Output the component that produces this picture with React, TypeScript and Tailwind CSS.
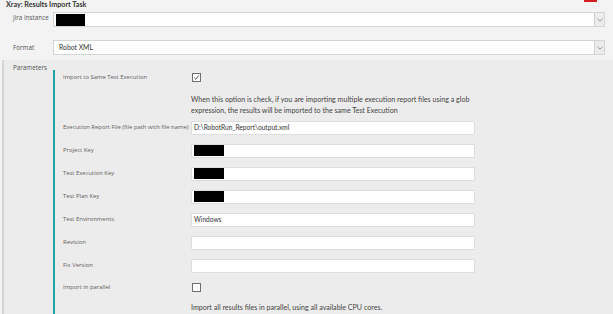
import React from "react";

const Redacted = ({ w, h = 12 }: { w: number; h?: number }) => (
  <div className="bg-black" style={{ width: w, height: h }} />
);

const LABEL_FONT = { fontFamily: '"Open Sans", "Noto Sans", sans-serif' };

function Chevron() {
  return (
    <svg width="6" height="4" viewBox="0 0 6 4" className="block">
      <path d="M0.5 0.8 L3 3.2 L5.5 0.8" fill="none" stroke="#8a8a8a" strokeWidth="0.9" />
    </svg>
  );
}

function Select({ children }: { children?: React.ReactNode }) {
  return (
    <div className="flex-1 h-[15px] bg-white border border-[#d4d4d4] flex items-center">
      <div className="flex-1 flex items-center pl-[1px] h-full">{children}</div>
      <div className="w-[10px] h-[13px] bg-[#ececec] border-l border-[#cfcfcf] flex items-center justify-center">
        <Chevron />
      </div>
    </div>
  );
}

function Row({ label, children, h = 23 }: { label: string; children: React.ReactNode; h?: number }) {
  return (
    <div className="flex items-center" style={{ height: h }}>
      <div className="w-[136px] pl-[8px] text-[5.9px] text-[#5e5e5e] whitespace-nowrap" style={LABEL_FONT}>
        {label}
      </div>
      <div className="flex-none">{children}</div>
    </div>
  );
}

function Input({ children }: { children?: React.ReactNode }) {
  return (
    <div className="w-[284px] h-[14px] bg-white border border-[#dddddd] rounded-[1px] flex items-center pl-[2px] text-[6.6px] text-[#333]">
      {children}
    </div>
  );
}

function Checkbox({ checked }: { checked?: boolean }) {
  return (
    <div className="ml-[1px] w-[9px] h-[9px] border border-[#6e6e6e] bg-white flex items-center justify-center">
      {checked && (
        <svg width="7" height="7" viewBox="0 0 7 7">
          <path d="M1.2 3.6 L2.8 5.2 L5.9 1.4" fill="none" stroke="#444" strokeWidth="0.9" />
        </svg>
      )}
    </div>
  );
}

export default function App() {
  return (
    <div
      className="relative w-[613px] h-[314px] overflow-hidden bg-[#f3f3f3] flex flex-col"
      style={{ fontFamily: 'Lato, "Open Sans", sans-serif' }}
    >
      <div className="absolute left-[584px] top-0 w-[13px] h-[2px] bg-[#d21f1f]" />
      <div className="h-[10px] pl-[6px] text-[7.2px] font-bold text-[#333] leading-[10px]">
        Xray: Results Import Task
      </div>
      <div className="flex items-center mt-[2px] pr-[8px]">
        <div className="w-[53px] pl-[13px] text-[6.3px] text-[#555] self-start pt-[1px]" style={LABEL_FONT}>
          Jira Instance
        </div>
        <Select>
          <div className="ml-[1px]">
            <Redacted w={29} />
          </div>
        </Select>
      </div>
      <div className="flex items-center mt-[13px] pr-[8px]">
        <div className="w-[53px] pl-[13px] text-[6.3px] text-[#555]" style={LABEL_FONT}>
          Format
        </div>
        <Select>
          <span className="pl-[4px] text-[6.8px] text-[#333]">Robot XML</span>
        </Select>
      </div>
      <div className="mt-[5px] ml-[2px] flex-1 bg-[#ececec] border-l-[2px] border-[#d6d6d6] flex">
        <div className="w-[49px] pl-[9px] pt-[3px] text-[6.3px] text-[#555]" style={LABEL_FONT}>
          Parameters
        </div>
        <div className="mt-[10px] border-l-[2px] border-[#20a5a5] flex flex-col">
          <Row label="Import to Same Test Execution" h={15}>
            <Checkbox checked />
          </Row>
          <div className="pl-[136px] pt-[9px] text-[7.1px] leading-[11px] text-[#444] whitespace-nowrap">
            When this option is check, if you are importing multiple execution report files using a glob
            <br />
            expression, the results will be imported to the same Test Execution
          </div>
          <Row label="Execution Report File (file path with file name)">
            <Input>D:\RobotRun_Report\output.xml</Input>
          </Row>
          <Row label="Project Key">
            <Input>
              <Redacted w={30} h={11} />
            </Input>
          </Row>
          <Row label="Test Execution Key">
            <Input>
              <Redacted w={30} h={11} />
            </Input>
          </Row>
          <Row label="Test Plan Key">
            <Input>
              <Redacted w={30} h={11} />
            </Input>
          </Row>
          <Row label="Test Environments">
            <Input>Windows</Input>
          </Row>
          <Row label="Revision">
            <Input />
          </Row>
          <Row label="Fix Version">
            <Input />
          </Row>
          <Row label="Import in parallel" h={20}>
            <Checkbox />
          </Row>
          <div className="pl-[136px] pt-[5px] text-[7.1px] leading-[11px] text-[#444] whitespace-nowrap">
            Import all results files in parallel, using all available CPU cores.
          </div>
        </div>
      </div>
    </div>
  );
}
